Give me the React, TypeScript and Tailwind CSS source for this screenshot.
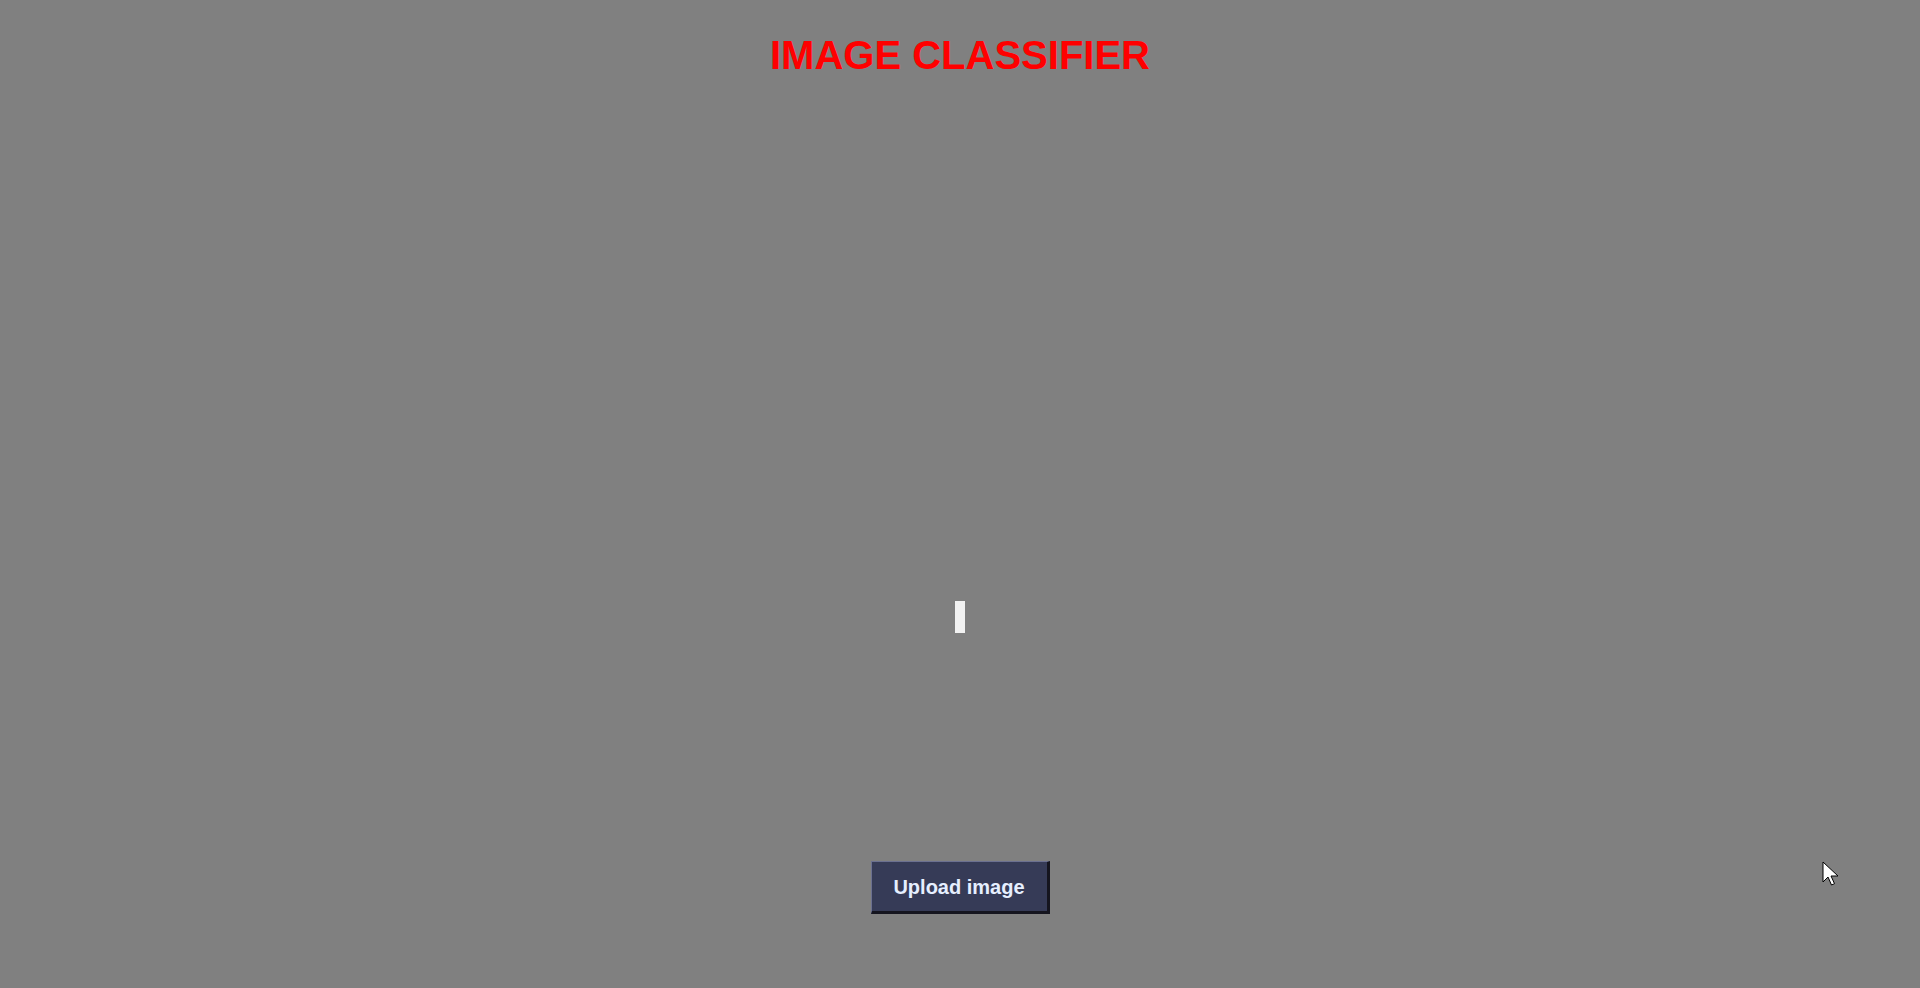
export default function App() {
  return (
    <div
      className="relative h-[988px] w-full overflow-hidden bg-[#808080] flex flex-col items-center"
      style={{ fontFamily: '"Liberation Sans", Arial, sans-serif' }}
    >
      <h1 className="mt-[35px] text-[40px] leading-none font-bold text-[#ff0000]">
        IMAGE CLASSIFIER
      </h1>

      {/* empty image placeholder */}
      <div className="mt-[526px] h-[32px] w-[10px] bg-[#f2f2f2]" />

      <button className="mt-[228px] h-[53px] w-[179px] border-t border-l border-t-[#6b7090] border-l-[#6b7090] border-b-[3px] border-r-[3px] border-b-[#15151f] border-r-[#15151f] bg-[#363b57] text-[20px] font-bold text-[#e6efff]">
        Upload image
      </button>

      {/* mouse pointer */}
      <svg
        className="absolute left-[1822px] top-[861px]"
        width="18"
        height="28"
        viewBox="0 0 18 28"
      >
        <path
          d="M1 1 L1 21 L6 16 L9.5 24 L12.5 22.7 L9 15 L16 15 Z"
          fill="#ffffff"
          stroke="#000000"
          strokeWidth="1"
          strokeLinejoin="miter"
        />
      </svg>
    </div>
  );
}
